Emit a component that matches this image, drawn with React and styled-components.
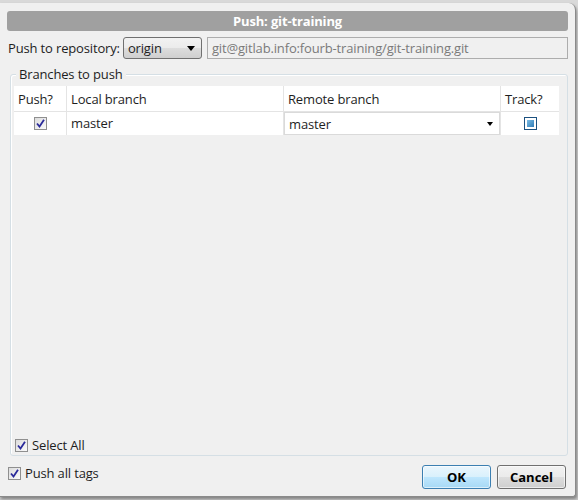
import React from "react";
import styled, { createGlobalStyle } from "styled-components";

const Global = createGlobalStyle`
  html, body {
    margin: 0;
    padding: 0;
    background: #9a9a9a;
  }
  body {
    font-family: "Open Sans", "Noto Sans", "DejaVu Sans", sans-serif;
    font-size: 13px;
    letter-spacing: -0.15px;
    color: #1e1e1e;
  }
`;

const Page = styled.div`
  width: 578px;
  height: 500px;
  overflow: hidden;
  background: linear-gradient(#d9d9d9 0, #d9d9d9 3px, #c8c8c8 100%);
`;

const Dialog = styled.div`
  box-sizing: border-box;
  width: 576px;
  height: 494px;
  margin-top: 3px;
  background: #f0f0f0;
  border-right: 1px solid #8a8a8a;
  border-bottom: 1px solid #8a8a8a;
  border-top-right-radius: 7px;
  border-bottom-right-radius: 3px;
  box-shadow: 1px 2px 3px rgba(0, 0, 0, 0.35);
  padding: 8px 6px 0 7px;
  display: flex;
  flex-direction: column;
`;

const TitleBar = styled.div`
  height: 20px;
  background: #a0a0a0;
  border-radius: 3px;
  color: #fff;
  font-weight: 700;
  display: flex;
  align-items: center;
  justify-content: center;
  margin-right: 1px;
`;

const RepoRow = styled.div`
  display: flex;
  align-items: center;
  height: 22px;
  margin-top: 6px;
  margin-left: 1px;
`;

const Label = styled.span`
  margin-right: 3px;
  white-space: nowrap;
`;

const Combo = styled.div`
  box-sizing: border-box;
  width: ${(p) => p.w}px;
  height: ${(p) => p.h || 22}px;
  display: flex;
  align-items: center;
  justify-content: space-between;
  padding: 0 6px 0 4px;
  border: 1px solid ${(p) => (p.flat ? "#dadada" : "#707070")};
  border-radius: ${(p) => (p.flat ? 0 : 3)}px;
  background: ${(p) =>
    p.flat ? "#fff" : "linear-gradient(#f2f2f2, #ebebeb 50%, #dddddd 51%, #cfcfcf)"};
`;

const Arrow = styled.span`
  width: 0;
  height: 0;
  border-left: ${(p) => (p.small ? 3 : 4)}px solid transparent;
  border-right: ${(p) => (p.small ? 3 : 4)}px solid transparent;
  border-top: ${(p) => (p.small ? 4 : 5)}px solid #000;
`;

const UrlField = styled.div`
  box-sizing: border-box;
  flex: 1;
  height: 22px;
  margin-left: 5px;
  margin-right: 1px;
  border: 1px solid #adadad;
  background: #f0f0f0;
  color: #7a7a7a;
  display: flex;
  align-items: center;
  padding-left: 4px;
`;

const Group = styled.div`
  box-sizing: border-box;
  margin: 15px 1px 0 3px;
  height: 382px;
  border: 1px solid #d5dfe5;
  border-radius: 3px;
  padding: 0 3px 2px 3px;
  display: flex;
  flex-direction: column;
  box-shadow: inset 1px 1px 0 #fff;
`;

const Legend = styled.div`
  align-self: flex-start;
  margin: -8px 0 0 2px;
  padding: 0 3px;
  line-height: 15px;
  background: #f0f0f0;
`;

const Table = styled.div`
  flex: 1;
  display: flex;
  flex-direction: column;
  margin-top: 4px;
  margin-right: 5px;
`;

const TRow = styled.div`
  display: grid;
  grid-template-columns: 53px 217px 217px 1fr;
  background: #fff;
  height: ${(p) => p.h}px;
  border-bottom: ${(p) => (p.head ? "1px solid #e4e4e4" : "none")};
`;

const Cell = styled.div`
  display: flex;
  align-items: ${(p) => (p.top ? "flex-start" : "center")};
  padding-top: ${(p) => (p.top ? 2 : 0)}px;
  justify-content: ${(p) => (p.center ? "center" : "flex-start")};
  padding-left: ${(p) => (p.center || p.flush ? 0 : 4)}px;
  border-right: ${(p) => (p.last ? "none" : "1px solid #e4e4e4")};
  box-sizing: border-box;
  overflow: hidden;
`;

const Box = styled.span`
  box-sizing: border-box;
  width: 13px;
  height: 13px;
  border: 1px solid #8f8f8f;
  background: linear-gradient(135deg, #dcdcdc, #fafafa);
  display: inline-flex;
  align-items: center;
  justify-content: center;
  flex: none;
`;

const TrackBox = styled(Box)`
  border-color: #1c5180;
  background: #fff;
  padding: 2px;
  &::after {
    content: "";
    display: block;
    width: 7px;
    height: 7px;
    background: linear-gradient(135deg, #7dbde6, #2f7cb6);
  }
`;

const Check = ({ track }) =>
  track ? (
    <TrackBox />
  ) : (
    <Box>
      <svg width="9" height="9" viewBox="0 0 9 9">
        <path d="M1 4.5 L3.5 7.5 L8 0.8" stroke="#2a2a9a" strokeWidth="1.8" fill="none" />
      </svg>
    </Box>
  );

const Spacer = styled.div`
  flex: 1;
`;

const CheckRow = styled.label`
  display: flex;
  align-items: center;
  gap: 4px;
  height: 16px;
  margin-left: ${(p) => p.ml || 0}px;
`;

const Footer = styled.div`
  display: flex;
  align-items: flex-start;
  justify-content: space-between;
  margin-top: 9px;
  margin-left: 1px;
`;

const Buttons = styled.div`
  display: flex;
  gap: 6px;
  margin-right: 3px;
`;

const Button = styled.button`
  box-sizing: border-box;
  width: 69px;
  height: 24px;
  font-family: inherit;
  font-size: 13px;
  font-weight: 700;
  color: #000;
  border-radius: 3px;
  border: 1px solid ${(p) => (p.primary ? "#3c7fb1" : "#707070")};
  background: ${(p) =>
    p.primary
      ? "linear-gradient(#eaf6fd, #d9f0fc 50%, #bee6fd 51%, #a7d9f5)"
      : "linear-gradient(#f2f2f2, #ebebeb 50%, #dddddd 51%, #cfcfcf)"};
  box-shadow: inset 0 0 0 1px rgba(255, 255, 255, 0.6);
  padding: 0;
`;

export default function App() {
  return (
    <Page>
      <Global />
      <Dialog>
        <TitleBar>Push: git-training</TitleBar>
        <RepoRow>
          <Label>Push to repository:</Label>
          <Combo w={79}>
            <span>origin</span>
            <Arrow />
          </Combo>
          <UrlField>git@gitlab.info:fourb-training/git-training.git</UrlField>
        </RepoRow>
        <Group>
          <Legend>Branches to push</Legend>
          <Table>
            <TRow head h={25}>
              <Cell>Push?</Cell>
              <Cell>Local branch</Cell>
              <Cell>Remote branch</Cell>
              <Cell last>Track?</Cell>
            </TRow>
            <TRow h={23}>
              <Cell center>
                <Check />
              </Cell>
              <Cell top>master</Cell>
              <Cell flush>
                <Combo flat w={217} h={23}>
                  <span>master</span>
                  <Arrow small />
                </Combo>
              </Cell>
              <Cell center last>
                <Check track />
              </Cell>
            </TRow>
            <Spacer />
          </Table>
          <CheckRow ml={1}>
            <Check />
            Select All
          </CheckRow>
        </Group>
        <Footer>
          <CheckRow>
            <Check />
            Push all tags
          </CheckRow>
          <Buttons>
            <Button primary>OK</Button>
            <Button>Cancel</Button>
          </Buttons>
        </Footer>
      </Dialog>
    </Page>
  );
}
